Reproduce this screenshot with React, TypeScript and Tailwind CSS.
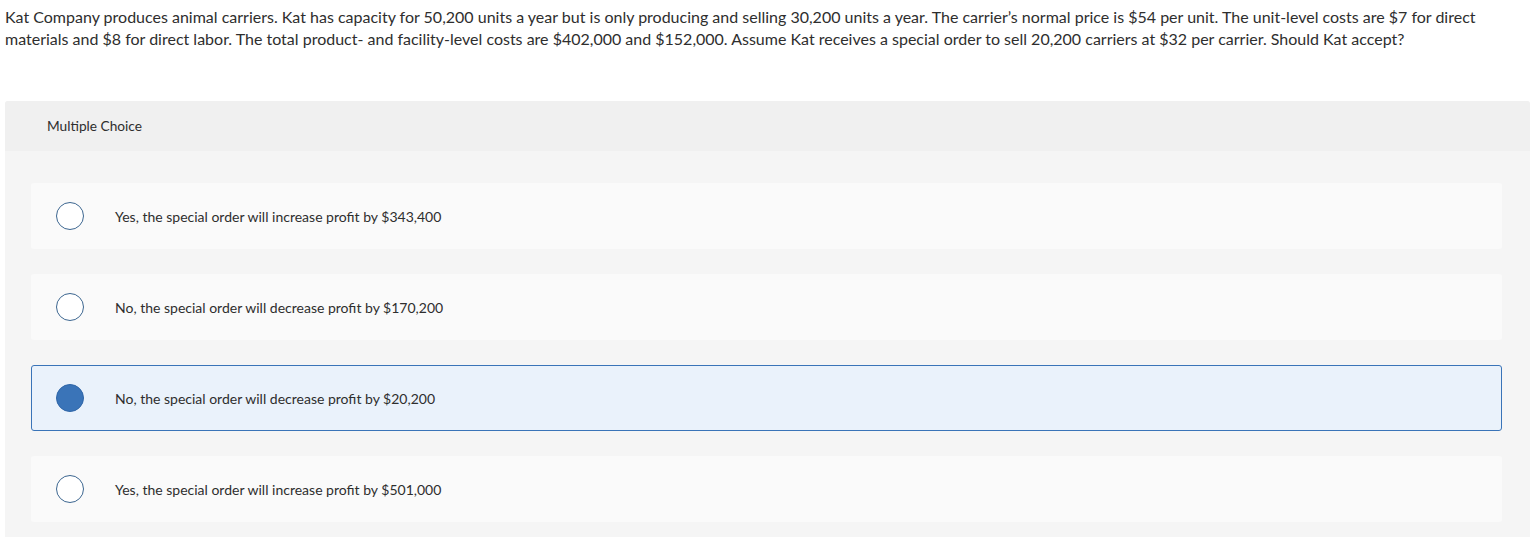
import React from 'react'

const options = [
  { text: 'Yes, the special order will increase profit by $343,400', selected: false },
  { text: 'No, the special order will decrease profit by $170,200', selected: false },
  { text: 'No, the special order will decrease profit by $20,200', selected: true },
  { text: 'Yes, the special order will increase profit by $501,000', selected: false },
]

export default function App() {
  return (
    <div className="min-h-[537px] bg-white text-[#2e2e2e]" style={{ fontFamily: 'Lato, "Open Sans", sans-serif' }}>
      {/* Question */}
      <p className="pl-[5px] pr-[30px] pt-[6px] text-[16px] leading-[22px]">
        Kat Company produces animal carriers. Kat has capacity for 50,200 units a year but is only producing and selling 30,200 units a year. The carrier’s normal price is $54 per unit. The unit-level costs are $7 for direct materials and $8 for direct labor. The total product- and facility-level costs are $402,000 and $152,000. Assume Kat receives a special order to sell 20,200 carriers at $32 per carrier. Should Kat accept?
      </p>

      {/* Answer panel */}
      <div className="mt-[51px] ml-[5px] w-[1525px] rounded-t-[3px] bg-[#f5f5f5]">
        <div className="flex h-[50px] items-center rounded-t-[3px] bg-[#f0f0f0] pl-[42px] pt-px text-[13.7px]">
          Multiple Choice
        </div>
        <div className="flex flex-col gap-[25px] pl-[26px] pr-[28px] pt-[32px] pb-[15px]">
          {options.map((o, i) => (
            <div
              key={i}
              className={`flex h-[66px] items-center rounded-[3px] border ${
                o.selected ? 'border-[#3a74b8] bg-[#eaf2fb]' : 'border-transparent bg-[#fafafa]'
              }`}
            >
              <div className="ml-[24px] flex w-[28px] justify-center">
                <span
                  className={`block h-[28px] w-[28px] rounded-full border-[1.5px] ${
                    o.selected ? 'border-[#2f66a8] bg-[#3a74b8]' : 'border-[#3c6690] bg-white'
                  }`}
                />
              </div>
              <span className="ml-[31px] text-[14px]">{o.text}</span>
            </div>
          ))}
        </div>
      </div>
    </div>
  )
}
